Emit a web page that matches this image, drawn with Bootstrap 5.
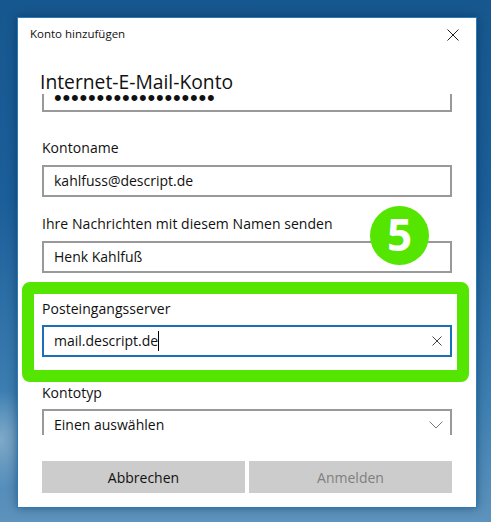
<!DOCTYPE html>
<html lang="de">
<head>
    <meta charset="UTF-8">
    <meta name="viewport" content="width=device-width, initial-scale=1.0">
    <title>Konto hinzufügen</title>
    <link href="https://cdn.jsdelivr.net/npm/bootstrap@5.3.0/dist/css/bootstrap.min.css" rel="stylesheet">
    <style>
        html, body {
            height: 522px;
            overflow: hidden;
        }
        body {
            font-family: "Open Sans", "Noto Sans", sans-serif;
            color: #111;
            background: radial-gradient(ellipse 40px 50px at 0 440px, #7fa9c8, transparent),
                linear-gradient(180deg, #17578f 0, #1b5e99 200px, #3d7fb2 400px, #5d93bd 522px);
            padding: 18px 15px 15px 18px;
        }
        .mail-dialog {
            width: 458px;
            height: 489px;
            background: #fff;
            box-shadow: 0 0 0 1px #2a7db8, 0 0 9px 1px rgba(0, 30, 60, .45);
        }
        .dialog-title {
            height: 32px;
            padding: 7px 17px 0 12px;
            font-size: 11.5px;
        }
        .dialog-heading {
            margin: 17px 0 0 22px;
            height: 27px;
            font-size: 19.3px;
            line-height: 30px;
        }
        .scroll-area {
            height: 341px;
            overflow: hidden;
            padding: 0 24px;
        }
        .text-box {
            height: 32px;
            border: 2px solid #999;
            padding: 0 10px;
            font-size: 14px;
            line-height: 28px;
        }
        .field-label {
            font-size: 14px;
            line-height: 20px;
            margin-bottom: 7px;
            letter-spacing: .05px;
        }
        .password-box {
            margin-top: -14px;
            font-family: "Liberation Sans", sans-serif;
            font-size: 22px;
            line-height: 32px;
            letter-spacing: .8px;
        }
        .name-label { margin-top: 26px; }
        .sender-label { margin-top: 17px; }
        .server-frame {
            margin: 9px -17px 0 -20px;
            padding: 5px 5px 13px 8px;
            border: 12px solid #54e600;
            border-radius: 8px;
        }
        .server-frame .field-label { margin-bottom: 6px; }
        .server-box { border-color: #1a6fb8; }
        .type-label { margin-top: 1px; margin-bottom: 6px; }
        .caret-bar {
            display: inline-block;
            width: 1px;
            height: 20px;
            background: #000;
            vertical-align: -5px;
        }
        .clear-cross { margin-right: -2px; }
        .select-arrow { margin-right: -3px; }
        .step-badge {
            position: absolute;
            left: 352px;
            top: 188px;
            width: 59px;
            height: 59px;
            border-radius: 50%;
            background: #54e600;
            color: #fff;
            font-size: 44px;
            font-weight: 700;
            line-height: 57px;
            text-align: center;
        }
        .btn-row {
            padding: 26px 24px 0;
            gap: 4px;
        }
        .btn-row .btn {
            flex: 1;
            height: 32px;
            padding: 0;
            border: 0;
            border-radius: 0;
            background: #ccc;
            color: #111;
            font-size: 14px;
            opacity: 1;
        }
        .btn-row .btn:disabled { color: #7f7f7f; }
    </style>
</head>
<body>
<div class="mail-dialog position-relative">
    <div class="dialog-title d-flex justify-content-between align-items-start">
        <span>Konto hinzufügen</span>
        <svg width="12" height="12" viewBox="0 0 12 12" class="mt-1" aria-label="Schließen"><path d="M.5.5l11 11M11.500.5l-11 11" stroke="#222" fill="none"/></svg>
    </div>
    <div class="dialog-heading">Internet-E-Mail-Konto</div>
    <div class="scroll-area">
        <div class="text-box password-box">•••••••••••••••••••</div>
        <div class="field-label name-label">Kontoname</div>
        <div class="text-box">kahlfuss@descript.de</div>
        <div class="field-label sender-label">Ihre Nachrichten mit diesem Namen senden</div>
        <div class="text-box">Henk Kahlfuß</div>
        <div class="server-frame">
            <div class="field-label">Posteingangsserver</div>
            <div class="text-box server-box d-flex justify-content-between align-items-center">
                <span>mail.descript.de<span class="caret-bar"></span></span>
                <svg class="clear-cross" width="10" height="10" viewBox="0 0 10 10"><path d="M.5.5l9 9M9.500.5l-9 9" stroke="#444" fill="none"/></svg>
            </div>
        </div>
        <div class="field-label type-label">Kontotyp</div>
        <div class="text-box d-flex justify-content-between align-items-center">
            <span>Einen auswählen</span>
            <svg class="select-arrow" width="14" height="8" viewBox="0 0 14 8"><path d="M.5.5L7 7l6.500-6.500" stroke="#777" fill="none"/></svg>
        </div>
    </div>
    <div class="btn-row d-flex">
        <button type="button" class="btn">Abbrechen</button>
        <button type="button" class="btn" disabled>Anmelden</button>
    </div>
    <div class="step-badge">5</div>
</div>
<script src="https://cdn.jsdelivr.net/npm/bootstrap@5.3.0/dist/js/bootstrap.bundle.min.js"></script>
</body>
</html>
